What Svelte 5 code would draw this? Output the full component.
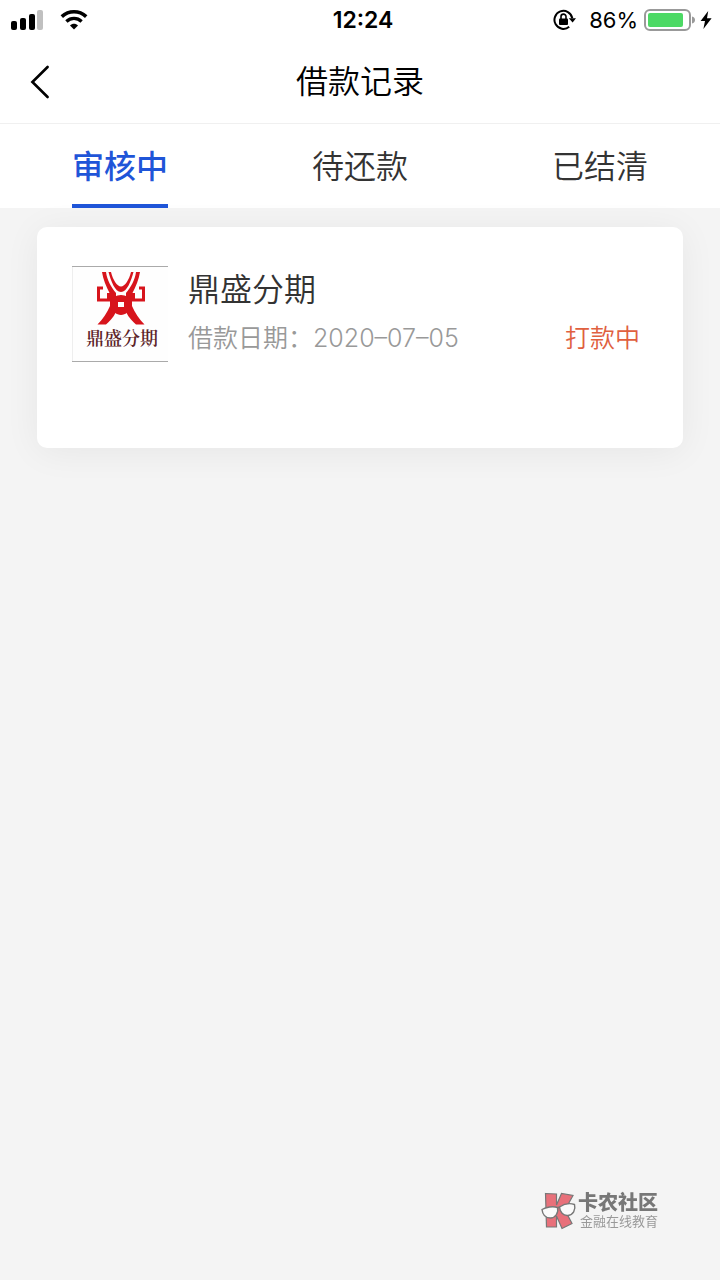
<script lang="ts">
	interface Loan {
		id: number;
		name: string;
		date: string;
		status: string;
	}

	const tabs = ['审核中', '待还款', '已结清'];
	const loans: Loan[] = [{ id: 1, name: '鼎盛分期', date: '2020–07–05', status: '打款中' }];

	let active = $state(0);
	let visible = $derived(active === 0 ? loans : []);
</script>

<div class="page">
	<div class="status-bar">
		<div class="status-left">
			<svg width="34" height="20" viewBox="0 0 34 20" aria-hidden="true">
				<rect x="1" y="11" width="6" height="9" rx="2" />
				<rect x="10" y="8" width="6" height="12" rx="2" />
				<rect x="19" y="4" width="6" height="16" rx="2" />
				<rect x="27" y="0" width="6" height="20" rx="2" fill="#c0c0c0" />
			</svg>
			<svg width="28" height="20" viewBox="0 0 28 20" aria-hidden="true">
				<path d="M1.8 6.6C8.8 .2 19.2 .2 26.2 6.6" fill="none" stroke="#000" stroke-width="3.6" />
				<path d="M6.4 11.4C10.8 7.4 17.2 7.4 21.6 11.4" fill="none" stroke="#000" stroke-width="3.4" />
				<path d="M10 15.4C12.3 13.1 15.7 13.1 18 15.4L14 19.4Z" />
			</svg>
		</div>
		<span class="time">12:24</span>
		<div class="status-right">
			<svg class="lock" width="24" height="22" viewBox="0 0 24 22" aria-hidden="true">
				<path d="M19.3 9.2A9 9 0 1 0 16.2 17.8" fill="none" stroke="#000" stroke-width="2" />
				<path d="M15.8 9.2H23L19.6 13.6Z" />
				<rect x="6" y="9.4" width="9" height="6.6" rx="1" />
				<path d="M8 10V7.6a2.5 2.5 0 0 1 5 0V10" fill="none" stroke="#000" stroke-width="1.6" />
			</svg>
			<span class="percent">86%</span>
			<svg width="52" height="22" viewBox="0 0 52 22" aria-hidden="true">
				<rect x="1" y="1" width="45" height="20" rx="5" fill="#fff" stroke="#999" stroke-width="2" />
				<rect x="4" y="4" width="35" height="14" rx="2" fill="#4cd964" />
				<path d="M48 7.5C52 8 52 14 48 14.5Z" fill="#999" />
			</svg>
			<svg class="bolt" width="12" height="20" viewBox="0 0 12 20" aria-hidden="true">
				<path d="M8.2 1L.6 11H5L3.4 19L11.6 8.2H7Z" />
			</svg>
		</div>
	</div>

	<header class="nav">
		<button class="back" aria-label="返回">
			<svg width="20" height="34" viewBox="0 0 20 34" aria-hidden="true">
				<path d="M17.6 2L2.4 17L17.6 32" fill="none" stroke="#000" stroke-width="2.6" stroke-linecap="round" />
			</svg>
		</button>
		<h1>借款记录</h1>
	</header>

	<nav class="tabs">
		{#each tabs as tab, i}
			<button class="tab" class:active={active === i} onclick={() => (active = i)}>
				<span>{tab}</span>
			</button>
		{/each}
	</nav>

	<main>
		{#each visible as loan (loan.id)}
			<article class="card">
				<svg class="logo" width="96" height="96" viewBox="0 0 96 96" aria-hidden="true">
					<rect width="96" height="96" fill="#fefefe" />
					<path d="M0 .5H96M0 95.5H96" stroke="#aaa" />
					<path d="M.5 1V95" stroke="#eee" />
					<g fill="#d7141c">
						<path d="M30 6H34C35 14 39 21 44 27L44 46C41 52 37 56 34 58.500H25.500C31 53 35 47 38 40V28C34 20 31 13 30 6Z" />
						<path d="M68 6H64C63 14 59 21 54 27L54 46C57 52 61 56 64 58.500H72.500C67 53 63 47 60 40V28C64 20 67 13 68 6Z" />
						<path d="M36.500 6H39C41 14 45 20.500 49 20.500C53 20.500 57 14 59 6H61.500C59 15 55 26 49 26C43 26 39 15 36.500 6Z" />
						<path d="M38 34C41 32 44 29 49 29C54 29 57 32 60 34V43C56 45 54 49 49 49C44 49 42 45 38 43Z" />
					</g>
					<path d="M31 22H26.500V34H36.500V27M67 22H71.500V34H61.500V27" fill="none" stroke="#d7141c" stroke-width="3" />
					<rect x="46" y="36" width="6" height="5" fill="#fff" />
					<text x="50" y="79" text-anchor="middle">鼎盛分期</text>
				</svg>
				<div class="info">
					<h2>{loan.name}</h2>
					<p>借款日期：<time datetime="2020-07-05">{loan.date}</time></p>
				</div>
				<span class="state">{loan.status}</span>
			</article>
		{/each}
	</main>

	<div class="watermark">
		<svg width="36" height="38" viewBox="0 0 36 38" aria-hidden="true">
			<path d="M4.5 1.5L15.5 2V13L20.5 1.5L32 3.5L24 18L31 31.5L21 36.5L15.5 24V35H5.5Z" fill="#e8707a" stroke="#777" stroke-width="1.2" />
			<path d="M1 17.5C5 15 12 14 16.5 15.5C18 21 14 26 9.5 26C4 26 1.5 22 1 17.5Z" fill="#fafafa" stroke="#777" stroke-width="1.4" />
			<path d="M18.5 15C23 12 29 11 33.5 12.5C35 18 32 23 27 23.5C22 24 19 20 18.5 15Z" fill="#fafafa" stroke="#777" stroke-width="1.4" />
			<path d="M16 16L19 15" stroke="#777" stroke-width="1.6" />
		</svg>
		<div class="brand">
			<strong>卡农社区</strong>
			<small>金融在线教育</small>
		</div>
	</div>
</div>

<style>
	:global(body) {
		margin: 0;
		background: #f4f4f4;
	}

	.page {
		min-height: 100vh;
		background: #f4f4f4;
		color: #333;
		font-family: Inter, 'Noto Sans CJK SC', sans-serif;
	}

	button {
		border: none;
		padding: 0;
		background: none;
		color: inherit;
		font: inherit;
		cursor: pointer;
	}

	h1,
	h2,
	p {
		margin: 0;
		font-weight: 350;
	}

	.status-bar {
		display: grid;
		grid-template-columns: 1fr auto 1fr;
		align-items: center;
		height: 40px;
		padding: 0 8px 0 10px;
		background: #fff;
		color: #000;
	}

	.status-left,
	.status-right {
		display: flex;
		align-items: center;
	}

	.status-left {
		gap: 16px;
	}

	.status-right {
		justify-content: flex-end;
	}

	.time {
		padding-left: 4px;
		font-size: 23px;
		font-weight: 600;
	}

	.percent {
		margin: 0 6px 0 12px;
		font-size: 22px;
	}

	.bolt {
		margin-left: 4px;
	}

	.nav {
		display: grid;
		grid-template-columns: 80px 1fr 80px;
		align-items: center;
		height: 83px;
		border-bottom: 1px solid #f0f0f0;
		background: #fff;
		color: #000;
	}

	.back {
		display: flex;
		align-items: center;
		justify-content: center;
		height: 80px;
	}

	h1 {
		font-size: 32px;
		line-height: 48px;
		text-align: center;
	}

	.tabs {
		display: grid;
		grid-template-columns: repeat(3, 1fr);
		background: #fff;
	}

	.tab {
		display: flex;
		justify-content: center;
		font-size: 32px;
		font-weight: 350;
		line-height: 74px;
	}

	.tab span {
		padding-top: 6px;
		border-bottom: 4px solid transparent;
	}

	.tab.active {
		color: #1f55d8;
		font-weight: 500;
	}

	.tab.active span {
		border-color: #1f55d8;
	}

	main {
		padding: 19px 37px;
	}

	.card {
		display: flex;
		align-items: flex-start;
		box-sizing: border-box;
		min-height: 221px;
		padding: 39px 43px 39px 35px;
		border-radius: 10px;
		background: #fff;
		box-shadow: 0 4px 36px rgba(0, 0, 0, 0.06);
	}

	.logo {
		flex: none;
	}

	.logo text {
		fill: #5c2428;
		font-family: 'Noto Serif CJK SC', 'Noto Sans CJK SC', serif;
		font-size: 18px;
		font-weight: 600;
	}

	.info {
		flex: 1;
		margin-left: 20px;
	}

	h2 {
		font-size: 32px;
		line-height: 48px;
	}

	p,
	.state {
		font-size: 25px;
		line-height: 48px;
		font-weight: 350;
	}

	p {
		color: #999;
	}

	.state {
		margin-top: 48px;
		color: #e0603f;
	}

	.watermark {
		position: fixed;
		right: 62px;
		bottom: 50px;
		display: flex;
		align-items: center;
		gap: 1px;
		color: #999;
	}

	.brand {
		display: flex;
		flex-direction: column;
	}

	.brand strong {
		color: #777;
		font-size: 20px;
		font-weight: 900;
		line-height: 20px;
	}

	.brand small {
		padding-left: 2px;
		font-size: 13px;
		line-height: 16px;
	}
</style>
